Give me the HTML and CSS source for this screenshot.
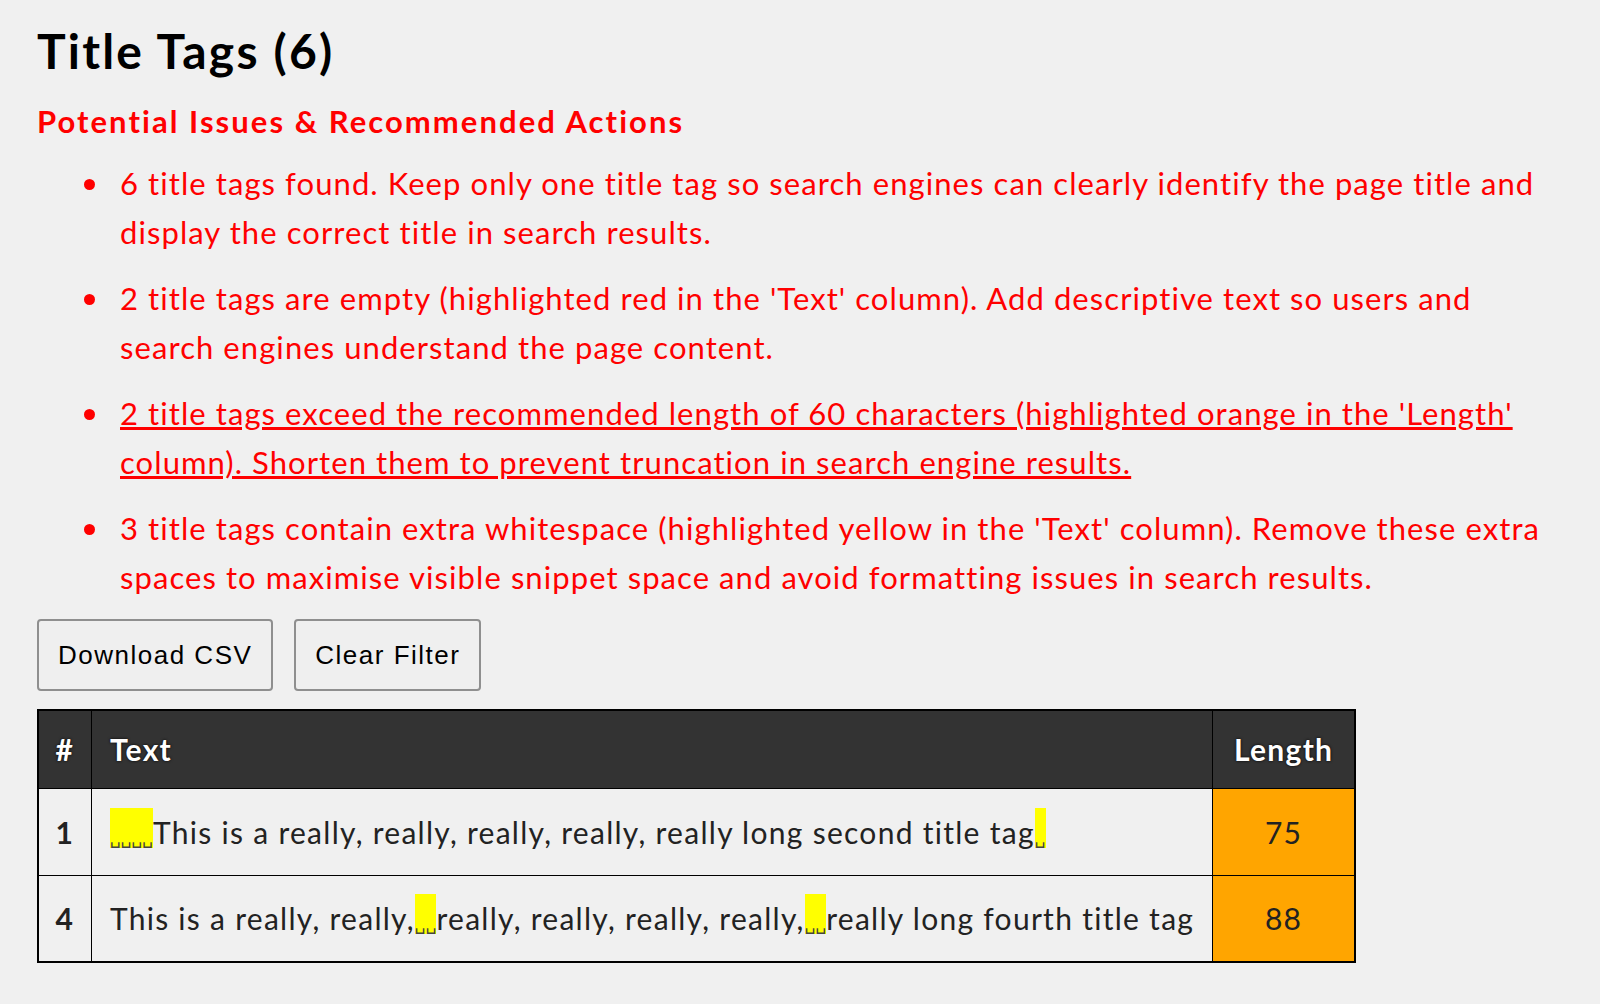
FILE: index.html
```html
<!DOCTYPE html>
<html>
	<head>
		<meta charset="utf-8">
		<title>Title Tags</title>
		<link rel="stylesheet" href="styles.css">
	</head>
	<body>
		<div class="report">
			<h1 class="title">Title Tags (6)</h1>
			<h2 class="issues-title">Potential Issues &amp; Recommended Actions</h2>
			<ul class="issues">
				<li>6 title tags found. Keep only one title tag so search engines can clearly identify the page title and display the correct title in search results.</li>
				<li>2 title tags are empty (highlighted red in the 'Text' column). Add descriptive text so users and search engines understand the page content.</li>
				<li><a class="filter-link" href="#">2 title tags exceed the recommended length of 60 characters (highlighted orange in the 'Length' column). Shorten them to prevent truncation in search engine results.</a></li>
				<li>3 title tags contain extra whitespace (highlighted yellow in the 'Text' column). Remove these extra spaces to maximise visible snippet space and avoid formatting issues in search results.</li>
			</ul>
			<div class="actions">
				<button class="btn">Download CSV</button>
				<button class="btn">Clear Filter</button>
			</div>
			<table class="tags">
				<thead>
					<tr>
						<th class="num">#</th>
						<th class="text">Text</th>
						<th class="len">Length</th>
					</tr>
				</thead>
				<tbody>
					<tr>
						<td class="num">1</td>
						<td class="text"><span class="ws">␣␣␣␣</span>This is a really, really, really, really, really long second title tag<span class="ws">␣</span></td>
						<td class="len long">75</td>
					</tr>
					<tr>
						<td class="num">4</td>
						<td class="text">This is a really, really,<span class="ws">␣␣</span>really, really, really, really,<span class="ws">␣␣</span>really long fourth title tag</td>
						<td class="len long">88</td>
					</tr>
				</tbody>
			</table>
		</div>
	</body>
</html>
```

FILE: styles.css
```css
* {
	margin: 0;
	padding: 0;
	box-sizing: border-box;
}

body {
	background-color: #f0f0f0;
	font-family: Lato, "Noto Sans", sans-serif;
	color: #000;
}

.report {
	padding: 23px 37px;
}

.title {
	font-size: 48px;
	font-weight: bold;
	line-height: 56px;
	letter-spacing: 2.2px;
}

.issues-title {
	margin-top: 24px;
	font-size: 31px;
	font-weight: bold;
	line-height: 36px;
	letter-spacing: 2.05px;
	color: #ff0000;
}

.issues {
	margin-top: 20px;
	padding-left: 83px;
	list-style: none;
	color: #ff0000;
	font-size: 31px;
	line-height: 49px;
	letter-spacing: 1.07px;
}

.issues li {
	position: relative;
	margin-bottom: 17px;
}

/* bullet sits closer to the text than the browser marker */
.issues li::before {
	content: "";
	position: absolute;
	left: -36px;
	top: 20px;
	width: 11px;
	height: 11px;
	border-radius: 50%;
	background-color: #ff0000;
}

.filter-link {
	color: #ff0000;
}

.actions {
	display: flex;
	gap: 21px;
	margin-top: 5px;
}

.btn {
	height: 72px;
	padding: 0 19px;
	font-family: "Liberation Sans", Arial, sans-serif;
	font-size: 26px;
	letter-spacing: 1.5px;
	color: #000;
	background-color: #efefef;
	border: 2px solid #8f8f8f;
	border-radius: 4px;
}

.tags {
	width: 1319px;
	margin-top: 18px;
	border-collapse: collapse;
	border: 2px solid #000;
	font-size: 30px;
	letter-spacing: 1.28px;
}

.tags th,
.tags td {
	border: 1px solid #000;
	padding: 0 18px;
}

.tags th {
	height: 78px;
	background-color: #333;
	color: #fff;
	font-weight: bold;
	text-align: left;
	text-shadow: 0 0 3px #000;
}

.tags td {
	height: 87px;
	color: #222;
}

.tags td.text {
	white-space: nowrap;
}

.tags .num {
	width: 54px;
	padding: 0;
	text-align: center;
	font-weight: bold;
}

.tags td.num {
	color: #222;
}

.tags .len {
	width: 143px;
	padding: 0;
	text-align: center;
}

.tags td.long {
	background-color: #ffa500;
}

.ws {
	padding-top: 20px;
	background-color: #ffff00;
	font-family: "DejaVu Sans", sans-serif;
	font-size: 17px;
	letter-spacing: 0;
	color: #444;
}
```
